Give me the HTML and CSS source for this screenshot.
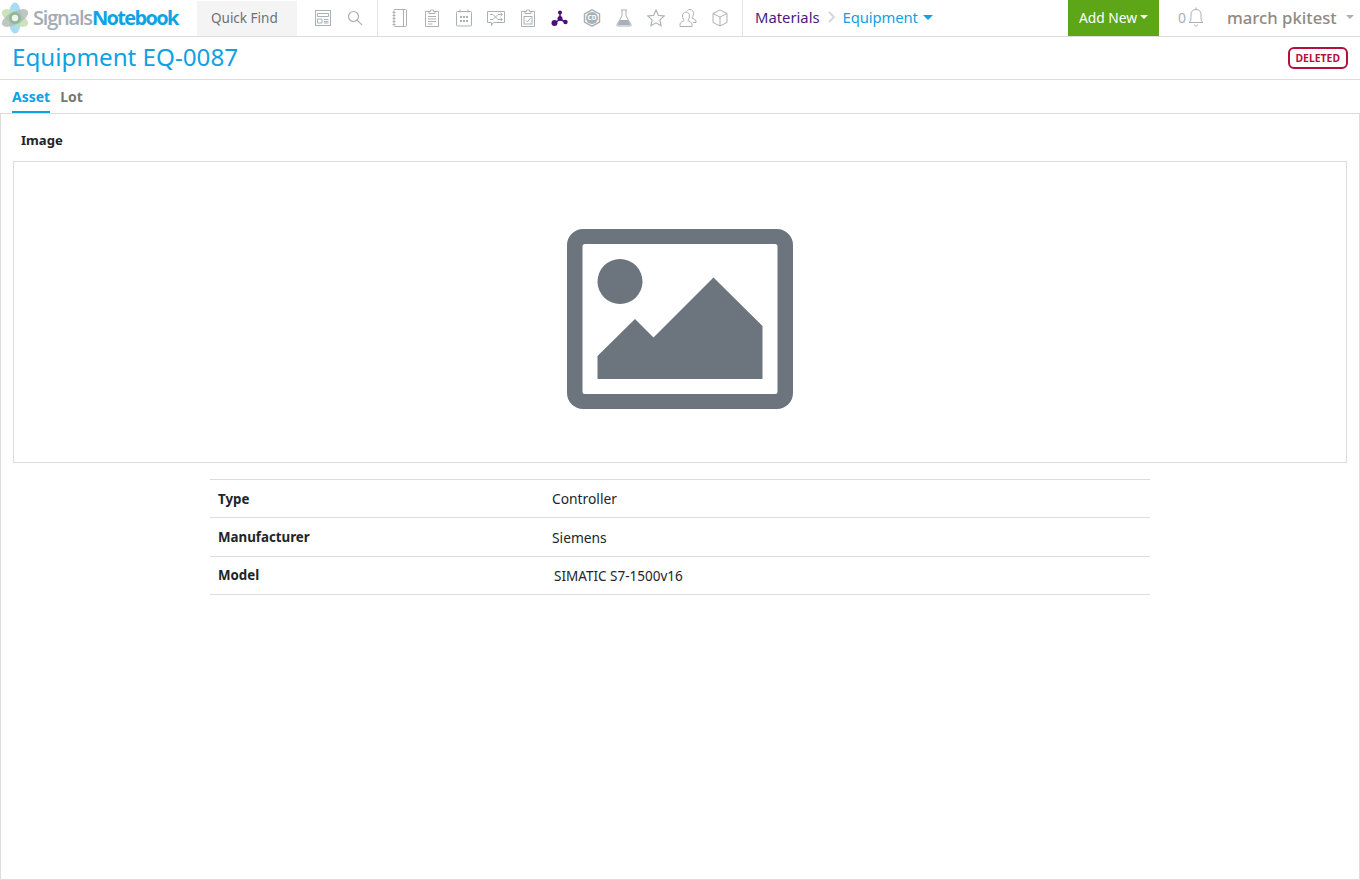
FILE: index.html
```html
<!DOCTYPE html>
<html lang="en">
<head>
<meta charset="utf-8">
<title>Equipment EQ-0087</title>
<link rel="stylesheet" href="styles.css">
</head>
<body>
<header class="topbar">
  <div class="logo">
    <svg class="logo-mark" width="32" height="34" viewBox="0 0 32 34">
      <ellipse cx="15" cy="17" rx="6.500" ry="15.500" fill="#a9dcf3"/>
      <ellipse cx="15" cy="17" rx="14.500" ry="6.500" transform="rotate(28 15 17)" fill="#c3dfb2" opacity=".85"/>
      <ellipse cx="15" cy="17" rx="14.500" ry="6.500" transform="rotate(-28 15 17)" fill="#b4bdb9" opacity=".85"/>
      <circle cx="15" cy="17" r="6" fill="#8db89a"/>
      <circle cx="15" cy="17" r="3.200" fill="#eef5ea"/>
    </svg>
    <span class="logo-text"><span class="logo-a">Signals</span><span class="logo-b">Notebook</span></span>
  </div>
  <div class="quick">Quick Find</div>
  <div class="tool-group first">
    <svg class="ic" width="18" height="18" viewBox="0 0 18 18"><g fill="none" stroke="#a9b1b6"><rect x="1.500" y="1.500" width="15" height="15"/><path d="M3.500 4.500h11v3h-11zM3.500 10h4.500v4h-4.500zM10 10.500h4.500M10 12.500h4.500M10 14h4.500"/></g></svg>
    <svg class="ic" width="18" height="18" viewBox="0 0 18 18"><g fill="none" stroke="#a9b1b6" stroke-width="1.200"><circle cx="7.500" cy="7.500" r="5"/><path d="M11.200 11.200l5 5"/></g></svg>
  </div>
  <div class="tool-group icons">
    <svg class="ic" width="18" height="18" viewBox="0 0 18 18"><g fill="none" stroke="#a9b1b6"><rect x="3" y=".5" width="12.500" height="17" rx="1"/><path d="M12.500 1v16M1.500 3.500h3M1.500 6.500h3M1.500 9.500h3M1.500 12.500h3M1.500 15.500h3"/></g></svg>
    <svg class="ic" width="18" height="18" viewBox="0 0 18 18"><g fill="none" stroke="#a9b1b6"><path d="M6 2.500H2.500v15h13v-15H12"/><path d="M6 4.500v-2h1.500V1h3v1.500H12v2zM5 7.500h8M5 10h8M5 12.500h8M5 15h4.500"/></g></svg>
    <svg class="ic" width="18" height="18" viewBox="0 0 18 18"><g fill="none" stroke="#a9b1b6"><rect x="1.500" y="2.500" width="15" height="14.500" rx="1"/><path d="M5 .5v3M13 .5v3"/></g><g fill="#a9b1b6"><rect x="5" y="7" width="2" height="2"/><rect x="8" y="7" width="2" height="2"/><rect x="11" y="7" width="2" height="2"/><rect x="5" y="11" width="2" height="2"/><rect x="8" y="11" width="2" height="2"/><rect x="11" y="11" width="2" height="2"/></g></svg>
    <svg class="ic" width="18" height="18" viewBox="0 0 18 18"><g fill="none" stroke="#a9b1b6"><path d="M.5 2.500h17v11H6.500l-2 3v-3h-4z"/><path d="M3 5.500h3l5 5h4M3 10.500h3l5-5h4M13.500 4l2 1.500-2 1.500M13.500 9l2 1.500-2 1.500"/></g></svg>
    <svg class="ic" width="18" height="18" viewBox="0 0 18 18"><g fill="none" stroke="#a9b1b6"><path d="M6 2.500H2.500v15h13v-15H12"/><path d="M6 4.500v-2h1.500V1h3v1.500H12v2z"/><rect x="5" y="7.500" width="8" height="7.500"/><path d="M7 11.500l1.500 1.500 3-4"/></g></svg>
    <svg class="ic" width="18" height="18" viewBox="0 0 18 18"><g stroke="#4b0f7a" stroke-width="1.500"><path d="M9 8.500V3M9 10l-5 4M9 10l5 3"/></g><g fill="#4b0f7a"><circle cx="9" cy="3.500" r="2"/><circle cx="9" cy="9.500" r="2.500"/><circle cx="3.500" cy="14" r="3"/><circle cx="14.500" cy="13" r="2.200"/></g></svg>
    <svg class="ic" width="18" height="18" viewBox="0 0 18 18"><path d="M9 .8l7.500 4.100v8.200L9 17.200l-7.500-4.100V4.900z" fill="none" stroke="#a9b1b6" stroke-width="1.500"/><circle cx="9" cy="9" r="6" fill="#a9b1b6"/><text x="9" y="11.200" class="cd">CD</text></svg>
    <svg class="ic" width="18" height="18" viewBox="0 0 18 18"><g stroke="#a9b1b6" fill="none"><path d="M6 1h6M7 1v6L2 15.500c-.5 1 0 1.500 1 1.500h12c1 0 1.500-.5 1-1.500L11 7V1"/></g><path d="M5 11h8l2.500 5h-13z" fill="#a9b1b6"/></svg>
    <svg class="ic" width="18" height="18" viewBox="0 0 18 18"><path d="M9 1l2.400 5.400 5.800.6-4.300 3.900 1.200 5.800L9 13.800l-5.100 2.900 1.200-5.800L.8 7l5.800-.6z" fill="none" stroke="#a9b1b6" stroke-width="1.100"/></svg>
    <svg class="ic" width="18" height="18" viewBox="0 0 18 18"><g fill="none" stroke="#a9b1b6"><path d="M1 17.500v-2.500c0-1.500 3-2.500 4-3.500 0-1-1.500-2-1.500-4.500C3.500 4.500 5 3 7 3s3.500 1.500 3.500 4c0 2.500-1.500 3.500-1.500 4.500 1 1 4 2 4 3.500v2.500z"/><path d="M8.500 1.500c.6-.6 1.400-1 2.500-1 2 0 3.500 1.500 3.500 4 0 2.500-1.500 3.500-1.500 4.500 1 1 4 1.500 4 3v1.500h-3"/></g></svg>
    <svg class="ic" width="18" height="18" viewBox="0 0 18 18"><g fill="none" stroke="#a9b1b6"><path d="M9 1l7 3.500v9L9 17l-7-3.500v-9z"/><path d="M2 4.500L9 8l7-3.500M9 8v9"/></g></svg>
  </div>
  <nav class="crumbs">
    <span class="crumb-a">Materials</span>
    <svg class="crumb-sep" width="8" height="12" viewBox="0 0 8 12"><path d="M1 1l5 5-5 5" fill="none" stroke="#d5d8da" stroke-width="2"/></svg>
    <span class="crumb-b">Equipment</span><span class="caret caret-blue"></span>
  </nav>
  <div class="add-new">Add New<span class="caret caret-white"></span></div>
  <div class="notif">
    <span class="count">0</span>
    <svg width="16" height="20" viewBox="0 0 16 20"><path d="M1 15.500c1.500-1 2-2 2-5V7c0-2.500 2-4.500 5-4.500s5 2 5 4.500v3.500c0 3 .5 4 2 5zM8 .5v2M6.500 17.500c0 1 .7 1.500 1.500 1.500s1.500-.5 1.500-1.500" fill="none" stroke="#a9b1b6"/></svg>
  </div>
  <div class="user">march pkitest<span class="caret caret-grey"></span></div>
</header>

<section class="title-bar">
  <h1 class="title">Equipment EQ-0087</h1>
  <span class="badge">DELETED</span>
</section>

<nav class="tabs">
  <span class="tab active">Asset</span>
  <span class="tab">Lot</span>
</nav>

<main class="panel">
  <div class="image-label">Image</div>
  <div class="image-box">
    <svg width="226" height="180" viewBox="567 229 226 180">
      <path fill-rule="evenodd" fill="#6c757d" d="M583 229h194a16 16 0 0 1 16 16v148a16 16 0 0 1-16 16H583a16 16 0 0 1-16-16V245a16 16 0 0 1 16-16zM585 244a2.500 2.500 0 0 0-2.500 2.500v145a2.500 2.500 0 0 0 2.500 2.500h190a2.500 2.500 0 0 0 2.500-2.500v-145a2.500 2.500 0 0 0-2.500-2.500z"/>
      <circle cx="620" cy="281.500" r="22.500" fill="#6c757d"/>
      <path fill="#6c757d" d="M597.500 356L635 319l18.500 18.500 60-60 49 48.500v53h-165z"/>
    </svg>
  </div>
  <div class="fields">
    <div class="row r1"><div class="key">Type</div><div class="val">Controller</div></div>
    <div class="row r2"><div class="key">Manufacturer</div><div class="val">Siemens</div></div>
    <div class="row r3"><div class="key key-up">Model</div><div class="val model">SIMATIC S7-1500v16</div></div>
  </div>
</main>
</body>
</html>
```
FILE: styles.css
```css
* { box-sizing: border-box; }
html, body { margin: 0; height: 100%; }
body {
  width: 1360px;
  height: 880px;
  overflow: hidden;
  background: #fff;
  color: #212529;
  font-family: "Noto Sans", "Open Sans", sans-serif;
  font-size: 14px;
  display: flex;
  flex-direction: column;
}
.topbar {
  height: 37px;
  flex: none;
  display: flex;
  align-items: center;
  border-bottom: 1px solid #dcdcdc;
}
.logo {
  width: 197px;
  height: 36px;
  display: flex;
  align-items: center;
  flex: none;
}
.logo-mark { flex: none; margin-right: 1px; }
.logo-text {
  font-family: "Open Sans", sans-serif;
  font-size: 20px;
  font-weight: 600;
  letter-spacing: -1.200px;
  margin-top: -1px;
}
.logo-a { color: #a3acb3; }
.logo-b { color: #0fa3e6; font-weight: 700; letter-spacing: -1.650px; }
.quick {
  width: 100px;
  height: 35px;
  margin-top: 1px;
  padding-left: 14px;
  background: #f4f4f4;
  color: #6a7177;
  font-size: 13.500px;
  line-height: 34px;
  flex: none;
}
.tool-group {
  height: 36px;
  display: flex;
  align-items: center;
  flex: none;
}
.tool-group.first {
  width: 81px;
  padding-left: 17px;
  gap: 14px;
  border-right: 1px solid #e3e3e3;
}
.tool-group.icons {
  width: 365px;
  padding-left: 13px;
  gap: 14px;
  border-right: 1px solid #e3e3e3;
}
.ic { flex: none; display: block; }
.cd {
  fill: #fff;
  font-size: 6.500px;
  font-weight: 700;
  text-anchor: middle;
  font-family: "Noto Sans", sans-serif;
}
.crumbs {
  width: 325px;
  height: 36px;
  padding: 0 0 2px 12px;
  display: flex;
  align-items: center;
  font-size: 14.800px;
  flex: none;
}
.crumb-a { color: #4b1a7f; }
.crumb-sep { margin: 0 7px 0 8px; }
.crumb-b { color: #0ea2e4; letter-spacing: -.1px; }
.caret {
  display: inline-block;
  width: 0;
  height: 0;
  border-style: solid;
  border-width: 4px 4px 0;
  border-color: transparent;
}
.caret-blue { border-top-color: #0ea2e4; border-width: 5px 5px 0; margin-left: 5px; }
.caret-white { border-top-color: #fff; margin-left: 3px; }
.caret-grey { border-top-color: #a9b1b6; margin-left: 9px; }
.add-new {
  width: 91px;
  height: 36px;
  padding-bottom: 2px;
  background: #5ca618;
  color: #fff;
  font-size: 13.800px;
  display: flex;
  align-items: center;
  justify-content: center;
  flex: none;
}
.notif {
  width: 68px;
  height: 36px;
  padding: 0 0 2px 19px;
  display: flex;
  align-items: center;
  gap: 2px;
  color: #a9b1b6;
  flex: none;
}
.user {
  height: 36px;
  padding-bottom: 2px;
  display: flex;
  align-items: center;
  color: #8f8a82;
  font-size: 16.700px;
  font-weight: 500;
  flex: none;
}
.title-bar {
  height: 43px;
  flex: none;
  display: flex;
  align-items: center;
  justify-content: space-between;
  padding: 0 12px;
  border-bottom: 1px solid #dcdcdc;
}
.title {
  margin: 0 0 4px;
  font-size: 24.200px;
  font-weight: 400;
  color: #0ea2e4;
}
.badge {
  height: 22px;
  padding: 0 6px;
  border: 2px solid #b5103c;
  border-radius: 6px;
  color: #b5103c;
  font-size: 10.400px;
  font-weight: 700;
  line-height: 18px;
}
.tabs {
  height: 33px;
  flex: none;
  display: flex;
  padding-left: 12px;
  gap: 10px;
}
.tab {
  height: 33px;
  line-height: 34px;
  font-size: 14px;
  font-weight: 700;
  color: #777;
}
.tab.active {
  color: #0ea2e4;
  border-bottom: 2px solid #0ea2e4;
}
.panel {
  flex: 1;
  border: 1px solid #dcdcdc;
  padding: 0 12px;
  display: flex;
  flex-direction: column;
}
.image-label {
  height: 47px;
  padding: 16px 0 0 8px;
  line-height: 20px;
  font-size: 13.100px;
  font-weight: 700;
}
.image-box {
  height: 302px;
  padding-top: 14px;
  border: 1px solid #dcdcdc;
  display: flex;
  align-items: center;
  justify-content: center;
  flex: none;
}
.fields {
  width: 940px;
  margin: 16px auto 0;
  border-top: 1px solid #dcdcdc;
  font-size: 13.800px;
}
.row {
  display: flex;
  border-bottom: 1px solid #dcdcdc;
  padding-left: 8px;
  align-items: center;
}
.r1 { height: 38px; }
.r2 { height: 39px; }
.r3 { height: 38px; }
.key { width: 334px; font-size: 13.300px; font-weight: 700; }
.key-up { padding-bottom: 2px; }
.val { color: #212529; }
.model { padding-left: 2px; font-size: 13.500px; }
```
